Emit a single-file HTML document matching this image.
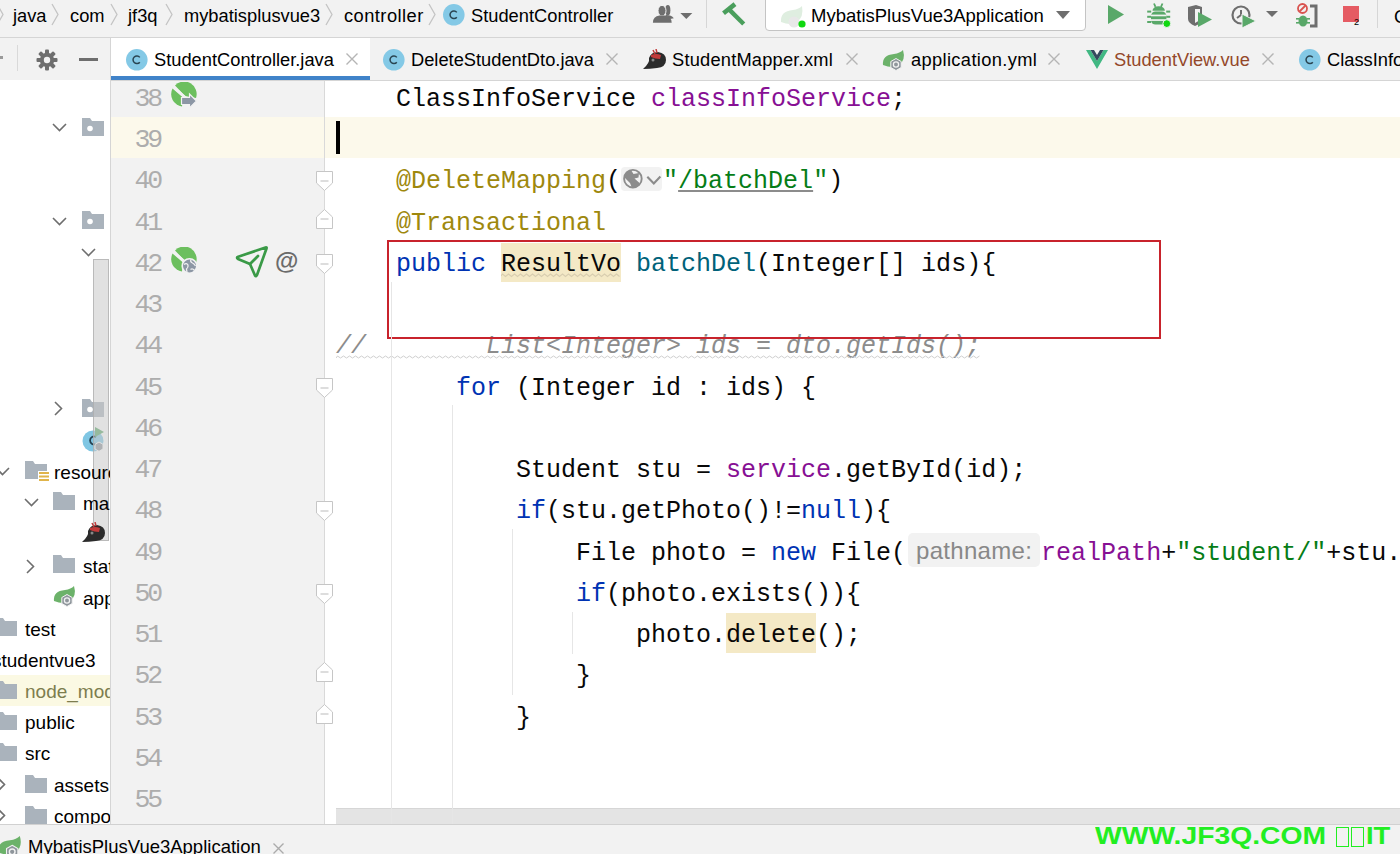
<!DOCTYPE html><html><head><meta charset="utf-8"><style>
*{box-sizing:border-box}
html,body{margin:0;padding:0}
body{width:1400px;height:854px;overflow:hidden;position:relative;background:#fff;font-family:"Liberation Sans",sans-serif;color:#000}
.abs{position:absolute}
.ui{font-family:"Liberation Sans",sans-serif;font-size:18.3px;white-space:nowrap;position:absolute;line-height:1}
.code{position:absolute;left:336px;height:41.25px;line-height:41.25px;margin-top:3px;font-family:"Liberation Mono",monospace;font-size:25px;white-space:pre;color:#080808}
.ln{position:absolute;left:108px;width:52px;margin-top:3px;text-align:right;height:41.25px;line-height:41.25px;font-family:"Liberation Mono",monospace;font-size:26.5px;color:#adadad;letter-spacing:-3.2px}
.chev{position:absolute;width:8px;height:22px}
.tree{font-family:"Liberation Sans",sans-serif;font-size:19px;white-space:nowrap;position:absolute;line-height:1;color:#000;height:24px}
</style></head><body>
<div class="abs" style="left:0;top:0;width:1400px;height:37px;background:#f2f2f2"></div>
<div class="abs" style="left:0;top:37px;width:1400px;height:1px;background:#d5d5d5"></div>
<svg class="abs" style="left:-4px;top:3px" width="9" height="23" viewBox="0 0 9 23"><path d="M1 1 L7 11.5 L1 22" fill="none" stroke="#c4c4c4" stroke-width="1.3"/></svg>
<div class="ui" style="left:13px;top:7px">java</div>
<svg class="abs" style="left:51px;top:3px" width="9" height="23" viewBox="0 0 9 23"><path d="M1 1 L7 11.5 L1 22" fill="none" stroke="#c4c4c4" stroke-width="1.3"/></svg>
<div class="ui" style="left:70px;top:7px">com</div>
<svg class="abs" style="left:110px;top:3px" width="9" height="23" viewBox="0 0 9 23"><path d="M1 1 L7 11.5 L1 22" fill="none" stroke="#c4c4c4" stroke-width="1.3"/></svg>
<div class="ui" style="left:128px;top:7px">jf3q</div>
<svg class="abs" style="left:165px;top:3px" width="9" height="23" viewBox="0 0 9 23"><path d="M1 1 L7 11.5 L1 22" fill="none" stroke="#c4c4c4" stroke-width="1.3"/></svg>
<div class="ui" style="left:184px;top:7px">mybatisplusvue3</div>
<svg class="abs" style="left:325px;top:3px" width="9" height="23" viewBox="0 0 9 23"><path d="M1 1 L7 11.5 L1 22" fill="none" stroke="#c4c4c4" stroke-width="1.3"/></svg>
<div class="ui" style="left:344px;top:7px;letter-spacing:0.45px">controller</div>
<svg class="abs" style="left:428px;top:3px" width="9" height="23" viewBox="0 0 9 23"><path d="M1 1 L7 11.5 L1 22" fill="none" stroke="#c4c4c4" stroke-width="1.3"/></svg>
<svg class="abs" style="left:441.7px;top:3.1999999999999993px" width="23.6" height="23.6" viewBox="0 0 23.6 23.6"><circle cx="11.8" cy="11.8" r="10.8" fill="#84c9e6"/><path d="M14.8 9.4 A3.8 3.8 0 1 0 14.8 14.200000000000001" fill="none" stroke="#2a4552" stroke-width="1.5"/></svg>
<div class="ui" style="left:471px;top:7px">StudentController</div>
<svg class="abs" style="left:650px;top:0px" width="46" height="30" viewBox="0 0 46 30">
<ellipse cx="17.8" cy="10.2" rx="2.6" ry="5.2" fill="#6e6e6e"/><path d="M15 15 Q21 14.5 23.8 18.2 L20 19 Z" fill="#6e6e6e"/>
<ellipse cx="12" cy="10.7" rx="4" ry="5.3" fill="#6e6e6e" stroke="#f2f2f2" stroke-width="1"/><path d="M2.9 22.7 Q3 16.5 9.5 15.6 L14.5 15.6 Q21.5 16.5 21.7 22.7 Z" fill="#6e6e6e"/>
<path d="M30.3 12.9 L42.3 12.9 L36.3 18.9 Z" fill="#6e6e6e"/></svg>
<div class="abs" style="left:706px;top:0;width:1px;height:28px;background:#d6d6d6"></div>
<svg class="abs" style="left:719px;top:0px" width="28" height="28" viewBox="0 0 28 28">
<path d="M4.5 13.3 L16 4.1" stroke="#4a9e5c" stroke-width="4.6"/><path d="M10 9.4 L24.7 24" stroke="#4a9e5c" stroke-width="4.4"/></svg>
<div class="abs" style="left:765px;top:-4px;width:321px;height:35px;background:#fff;border:1px solid #c4c4c4;border-radius:4px"></div>
<svg class="abs" style="left:779px;top:5px" width="28" height="24" viewBox="0 0 28 24">
<path d="M2 17 Q1 6 14 5 Q20 4 23 1 Q25 12 18 17 Q12 21 2 17 Z" fill="#dfeee0"/>
<circle cx="15" cy="17" r="5.5" fill="#e8e8e8"/><circle cx="23" cy="19" r="3.6" fill="#10d810"/></svg>
<div class="ui" style="left:811px;top:7px;font-size:18.5px">MybatisPlusVue3Application</div>
<svg class="abs" style="left:1056px;top:11px" width="15" height="9" viewBox="0 0 15 9"><path d="M0 0 L14 0 L7 8 Z" fill="#6e6e6e"/></svg>
<svg class="abs" style="left:1107px;top:5px" width="18" height="19" viewBox="0 0 18 19"><path d="M1 0 L17 9.5 L1 19 Z" fill="#59a869"/></svg>
<svg class="abs" style="left:1146px;top:0px" width="27" height="30" viewBox="0 0 27 30">
<g stroke="#59a869" stroke-width="1.8"><path d="M8 3.5 L9.5 6.8 M16.5 3.5 L15 6.8"/></g>
<g fill="#59a869"><path d="M6.5 10.8 A6.2 4.6 0 0 1 18.9 10.8 Z"/><rect x="5" y="11.5" width="15.4" height="13" rx="4.5"/>
<rect x="1.2" y="10.6" width="4" height="2"/><rect x="1.2" y="15.8" width="4" height="2"/><rect x="1.2" y="21" width="4" height="2"/>
<rect x="20.2" y="10.6" width="4" height="2"/><rect x="20.2" y="15.8" width="4" height="2"/></g>
<rect x="5" y="14.6" width="15.4" height="1.7" fill="#f2f2f2"/><rect x="5" y="19.2" width="15.4" height="1.7" fill="#f2f2f2"/>
<circle cx="20.8" cy="23.6" r="3.9" fill="#10d810" stroke="#f2f2f2" stroke-width="1"/></svg>
<svg class="abs" style="left:1187px;top:5px" width="27" height="22" viewBox="0 0 27 22">
<path d="M1 2 L9 0 L15 2 L15 14 Q15 18 8 21 Q1 18 1 14 Z" fill="#6e6e6e"/><path d="M8 4 L13 4 L13 15 L8 18 Z" fill="#f2f2f2"/>
<path d="M11 7 L25 14.5 L11 22 Z" fill="#59a869"/></svg>
<svg class="abs" style="left:1231px;top:5px" width="50" height="24" viewBox="0 0 50 24">
<circle cx="10" cy="10" r="8.5" fill="none" stroke="#6e6e6e" stroke-width="2.2"/><path d="M10 5 L10 10 L6 13" fill="none" stroke="#6e6e6e" stroke-width="2"/>
<path d="M11 9 L25 16 L11 23 Z" fill="#59a869" stroke="#f2f2f2" stroke-width="1"/>
<path d="M35 6 L47 6 L41 12 Z" fill="#6e6e6e"/></svg>
<svg class="abs" style="left:1296px;top:3px" width="24" height="25" viewBox="0 0 24 25">
<circle cx="6.5" cy="5.5" r="4.5" fill="none" stroke="#d9534f" stroke-width="1.8"/><path d="M3.5 8.5 L9.5 2.5" stroke="#d9534f" stroke-width="1.8"/>
<g fill="#59a869"><ellipse cx="7" cy="18" rx="4.5" ry="5.5"/><rect x="0" y="15" width="3" height="1.6"/><rect x="0" y="19" width="3" height="1.6"/><rect x="11" y="15" width="3" height="1.6"/><rect x="11" y="19" width="3" height="1.6"/></g>
<path d="M14 3 L20 3 L20 23 L14 23" fill="none" stroke="#6e6e6e" stroke-width="3"/></svg>
<div class="abs" style="left:1343px;top:6px;width:16px;height:16px;background:#e55b63"></div>
<div class="abs" style="left:1354px;top:18px;font-size:9px;line-height:9px;color:#000;font-family:'Liberation Sans',sans-serif">2</div>
<div class="abs" style="left:1377px;top:0;width:1px;height:28px;background:#d6d6d6"></div>
<div class="ui" style="left:1394px;top:8px">C</div>
<div class="abs" style="left:0;top:38px;width:1400px;height:42px;background:#f2f2f2"></div>
<div class="abs" style="left:111px;top:80px;width:1289px;height:1px;background:#d5d5d5"></div>
<div class="abs" style="left:17px;top:45px;width:1px;height:26px;background:#d9d9d9"></div>
<svg class="abs" style="left:36px;top:49px" width="22" height="22" viewBox="0 0 22 22">
<g fill="#6e6e6e"><circle cx="11" cy="11" r="7.2"/>
<rect x="9" y="0.5" width="4" height="21" rx="1"/><rect x="0.5" y="9" width="21" height="4" rx="1"/>
<rect x="9" y="0.5" width="4" height="21" rx="1" transform="rotate(45 11 11)"/><rect x="9" y="0.5" width="4" height="21" rx="1" transform="rotate(-45 11 11)"/></g>
<circle cx="11" cy="11" r="3.2" fill="#f2f2f2"/></svg>
<div class="abs" style="left:79px;top:58px;width:19px;height:3px;background:#6e6e6e"></div>
<div class="abs" style="left:0;top:56px;width:3px;height:3px;background:#9a9a9a"></div>
<div class="abs" style="left:111px;top:38px;width:259px;height:42px;background:#fff"></div>
<div class="abs" style="left:111px;top:76px;width:259px;height:4px;background:#4083c9"></div>
<svg class="abs" style="left:124.50000000000001px;top:48.2px" width="23.6" height="23.6" viewBox="0 0 23.6 23.6"><circle cx="11.8" cy="11.8" r="10.8" fill="#84c9e6"/><path d="M14.8 9.4 A3.8 3.8 0 1 0 14.8 14.200000000000001" fill="none" stroke="#2a4552" stroke-width="1.5"/></svg>
<div class="ui" style="left:154px;top:51px">StudentController.java</div>
<svg class="abs" style="left:345.5px;top:53.0px" width="12" height="12" viewBox="0 0 12 12"><path d="M0.5 0.5 L11.5 11.5 M11.5 0.5 L0.5 11.5" stroke="#b5b5b5" stroke-width="1.4"/></svg>
<svg class="abs" style="left:381.7px;top:47.8px" width="23.6" height="23.6" viewBox="0 0 23.6 23.6"><circle cx="11.8" cy="11.8" r="10.8" fill="#84c9e6"/><path d="M14.8 9.4 A3.8 3.8 0 1 0 14.8 14.200000000000001" fill="none" stroke="#2a4552" stroke-width="1.5"/></svg>
<div class="ui" style="left:411px;top:51px">DeleteStudentDto.java</div>
<svg class="abs" style="left:606.0px;top:53.0px" width="12" height="12" viewBox="0 0 12 12"><path d="M0.5 0.5 L11.5 11.5 M11.5 0.5 L0.5 11.5" stroke="#b5b5b5" stroke-width="1.4"/></svg>
<svg class="abs" style="left:642px;top:49px" width="26" height="22" viewBox="0 0 26 22"><path d="M1 20 Q8 14 7 9 Q9 3 16 3 Q24 4 24 11 Q24 18 15 19 Q8 20 1 20 Z" fill="#2b2b2b"/><path d="M9 6 Q14 4 19 6 L18 10 Q13 10 9 8 Z" fill="#c23b3b"/><path d="M11 1 L13 5 M14 0 L15 4" stroke="#c23b3b" stroke-width="1.5"/><circle cx="11" cy="11" r="1.5" fill="#888"/></svg>
<div class="ui" style="left:672px;top:51px;letter-spacing:0.2px">StudentMapper.xml</div>
<svg class="abs" style="left:846.0px;top:53.0px" width="12" height="12" viewBox="0 0 12 12"><path d="M0.5 0.5 L11.5 11.5 M11.5 0.5 L0.5 11.5" stroke="#b5b5b5" stroke-width="1.4"/></svg>
<svg class="abs" style="left:882px;top:50px" width="24" height="22" viewBox="0 0 24 22"><path d="M1 15 Q0 5 12 4 Q18 3 21 0 Q24 10 17 15 Q11 19 1 15 Z" fill="#6cb26a"/><path d="M14 8.5 L19.2 11.5 L19.2 17.5 L14 20.5 L8.8 17.5 L8.8 11.5 Z" fill="#8f969c" stroke="#f2f2f2" stroke-width="1"/><circle cx="14" cy="14.5" r="2.6" fill="none" stroke="#f2f2f2" stroke-width="1.3"/></svg>
<div class="ui" style="left:911px;top:51px;letter-spacing:0.35px">application.yml</div>
<svg class="abs" style="left:1048.0px;top:53.0px" width="12" height="12" viewBox="0 0 12 12"><path d="M0.5 0.5 L11.5 11.5 M11.5 0.5 L0.5 11.5" stroke="#b5b5b5" stroke-width="1.4"/></svg>
<svg class="abs" style="left:1086px;top:50px" width="22" height="19" viewBox="0 0 22 19"><path d="M0 0 L4.5 0 L11 11 L17.5 0 L22 0 L11 19 Z" fill="#41b883"/><path d="M4.5 0 L8 0 L11 5 L14 0 L17.5 0 L11 11 Z" fill="#35495e"/></svg>
<div class="ui" style="left:1114px;top:51px;color:#94482a">StudentView.vue</div>
<svg class="abs" style="left:1262.0px;top:53.0px" width="12" height="12" viewBox="0 0 12 12"><path d="M0.5 0.5 L11.5 11.5 M11.5 0.5 L0.5 11.5" stroke="#b5b5b5" stroke-width="1.4"/></svg>
<svg class="abs" style="left:1297.5px;top:48.2px" width="23.6" height="23.6" viewBox="0 0 23.6 23.6"><circle cx="11.8" cy="11.8" r="10.8" fill="#84c9e6"/><path d="M14.8 9.4 A3.8 3.8 0 1 0 14.8 14.200000000000001" fill="none" stroke="#2a4552" stroke-width="1.5"/></svg>
<div class="ui" style="left:1327px;top:51px">ClassInfoService.java</div>
<div class="abs" style="left:110px;top:38px;width:1px;height:786px;background:#d5d5d5"></div>
<svg class="abs" style="left:52px;top:123px" width="15" height="9" viewBox="0 0 15 9"><path d="M1 1 L7.5 7.5 L14 1" fill="none" stroke="#6e6e6e" stroke-width="1.6"/></svg>
<svg class="abs" style="left:82px;top:118px" width="22" height="18" viewBox="0 0 22 18"><path d="M0 0 L8 0 L10 3 L22 3 L22 18 L0 18 Z" fill="#aab3bc"/><circle cx="8" cy="10.5" r="2.8" fill="#fff"/></svg>
<svg class="abs" style="left:52px;top:217px" width="15" height="9" viewBox="0 0 15 9"><path d="M1 1 L7.5 7.5 L14 1" fill="none" stroke="#6e6e6e" stroke-width="1.6"/></svg>
<svg class="abs" style="left:82px;top:211px" width="22" height="18" viewBox="0 0 22 18"><path d="M0 0 L8 0 L10 3 L22 3 L22 18 L0 18 Z" fill="#aab3bc"/><circle cx="8" cy="10.5" r="2.8" fill="#fff"/></svg>
<svg class="abs" style="left:81px;top:248px" width="15" height="9" viewBox="0 0 15 9"><path d="M1 1 L7.5 7.5 L14 1" fill="none" stroke="#6e6e6e" stroke-width="1.6"/></svg>
<svg class="abs" style="left:54px;top:401px" width="9" height="15" viewBox="0 0 9 15"><path d="M1 1 L7.5 7.5 L1 14" fill="none" stroke="#6e6e6e" stroke-width="1.6"/></svg>
<svg class="abs" style="left:82px;top:399px" width="22" height="18" viewBox="0 0 22 18"><path d="M0 0 L8 0 L10 3 L22 3 L22 18 L0 18 Z" fill="#aab3bc"/><circle cx="8" cy="10.5" r="2.8" fill="#fff"/></svg>
<svg class="abs" style="left:82px;top:427px" width="24" height="26" viewBox="0 0 24 26"><circle cx="11" cy="14" r="10.5" fill="#7fc6e3"/>
<path d="M14 10 A4 4 0 1 0 14 17" fill="none" stroke="#24404f" stroke-width="1.8"/><path d="M13 0 L22 5 L13 10 Z" fill="#59a869"/>
<path d="M17 15 L21 17.3 L21 22 L17 24.3 L13 22 L13 17.3 Z" fill="#8f969c" stroke="#fff" stroke-width="1"/></svg>
<svg class="abs" style="left:-5px;top:467px" width="15" height="9" viewBox="0 0 15 9"><path d="M1 1 L7.5 7.5 L14 1" fill="none" stroke="#6e6e6e" stroke-width="1.6"/></svg>
<svg class="abs" style="left:25px;top:461px" width="25" height="22" viewBox="0 0 25 22"><path d="M0 0 L8 0 L10 3 L22 3 L22 10 L13 10 L13 18 L0 18 Z" fill="#aab3bc"/>
<g fill="#e0b44a"><rect x="14" y="11" width="10" height="2"/><rect x="14" y="14.5" width="10" height="2"/><rect x="14" y="18" width="10" height="2"/></g></svg>
<div class="abs" style="left:93px;top:259px;width:16px;height:282px;background:rgba(200,200,200,0.55);border:1px solid rgba(170,170,170,0.7)"></div>
<div class="tree" style="left:54px;top:463px;width:56px;overflow:hidden">resources</div>
<svg class="abs" style="left:24px;top:498px" width="15" height="9" viewBox="0 0 15 9"><path d="M1 1 L7.5 7.5 L14 1" fill="none" stroke="#6e6e6e" stroke-width="1.6"/></svg>
<svg class="abs" style="left:53px;top:492px" width="22" height="18" viewBox="0 0 22 18"><path d="M0 0 L8 0 L10 3 L22 3 L22 18 L0 18 Z" fill="#aab3bc"/></svg>
<div class="tree" style="left:83px;top:494px;width:27px;overflow:hidden">mapper</div>
<svg class="abs" style="left:81px;top:522px" width="26" height="22" viewBox="0 0 26 22"><path d="M1 20 Q8 14 7 9 Q9 3 16 3 Q24 4 24 11 Q24 18 15 19 Q8 20 1 20 Z" fill="#2b2b2b"/><path d="M9 6 Q14 4 19 6 L18 10 Q13 10 9 8 Z" fill="#c23b3b"/><path d="M11 1 L13 5 M14 0 L15 4" stroke="#c23b3b" stroke-width="1.5"/><circle cx="11" cy="11" r="1.5" fill="#888"/></svg>
<svg class="abs" style="left:26px;top:559px" width="9" height="15" viewBox="0 0 9 15"><path d="M1 1 L7.5 7.5 L1 14" fill="none" stroke="#6e6e6e" stroke-width="1.6"/></svg>
<svg class="abs" style="left:53px;top:555px" width="22" height="18" viewBox="0 0 22 18"><path d="M0 0 L8 0 L10 3 L22 3 L22 18 L0 18 Z" fill="#aab3bc"/></svg>
<div class="tree" style="left:83px;top:557px;width:27px;overflow:hidden">static</div>
<svg class="abs" style="left:53px;top:586px" width="24" height="22" viewBox="0 0 24 22"><path d="M1 15 Q0 5 12 4 Q18 3 21 0 Q24 10 17 15 Q11 19 1 15 Z" fill="#6cb26a"/><path d="M14 8.5 L19.2 11.5 L19.2 17.5 L14 20.5 L8.8 17.5 L8.8 11.5 Z" fill="#8f969c" stroke="#f2f2f2" stroke-width="1"/><circle cx="14" cy="14.5" r="2.6" fill="none" stroke="#f2f2f2" stroke-width="1.3"/></svg>
<div class="tree" style="left:83px;top:589px;width:27px;overflow:hidden">application.yml</div>
<svg class="abs" style="left:-5px;top:618px" width="22" height="18" viewBox="0 0 22 18"><path d="M0 0 L8 0 L10 3 L22 3 L22 18 L0 18 Z" fill="#aab3bc"/></svg>
<div class="tree" style="left:25px;top:620px">test</div>
<div class="tree" style="left:-8px;top:651px">studentvue3</div>
<div class="abs" style="left:0;top:675px;width:110px;height:31px;background:#fbf9e3"></div>
<svg class="abs" style="left:-5px;top:681px" width="22" height="18" viewBox="0 0 22 18"><path d="M0 0 L8 0 L10 3 L22 3 L22 18 L0 18 Z" fill="#aab3bc"/></svg>
<div class="tree" style="left:25px;top:682px;width:85px;height:24px;overflow:hidden;color:#7d7d4e">node_modules</div>
<svg class="abs" style="left:-5px;top:712px" width="22" height="18" viewBox="0 0 22 18"><path d="M0 0 L8 0 L10 3 L22 3 L22 18 L0 18 Z" fill="#aab3bc"/></svg>
<div class="tree" style="left:25px;top:713px">public</div>
<svg class="abs" style="left:-5px;top:743px" width="22" height="18" viewBox="0 0 22 18"><path d="M0 0 L8 0 L10 3 L22 3 L22 18 L0 18 Z" fill="#aab3bc"/></svg>
<div class="tree" style="left:25px;top:744px">src</div>
<svg class="abs" style="left:-3px;top:777px" width="9" height="15" viewBox="0 0 9 15"><path d="M1 1 L7.5 7.5 L1 14" fill="none" stroke="#6e6e6e" stroke-width="1.6"/></svg>
<svg class="abs" style="left:25px;top:775px" width="22" height="18" viewBox="0 0 22 18"><path d="M0 0 L8 0 L10 3 L22 3 L22 18 L0 18 Z" fill="#aab3bc"/></svg>
<div class="tree" style="left:54px;top:776px">assets</div>
<svg class="abs" style="left:-3px;top:808px" width="9" height="15" viewBox="0 0 9 15"><path d="M1 1 L7.5 7.5 L1 14" fill="none" stroke="#6e6e6e" stroke-width="1.6"/></svg>
<svg class="abs" style="left:25px;top:806px" width="22" height="18" viewBox="0 0 22 18"><path d="M0 0 L8 0 L10 3 L22 3 L22 18 L0 18 Z" fill="#aab3bc"/></svg>
<div class="tree" style="left:54px;top:807px;width:56px;overflow:hidden">components</div>
<div class="abs" style="left:111px;top:81px;width:213px;height:743px;background:#f2f2f2"></div>
<div class="abs" style="left:324px;top:81px;width:1px;height:743px;background:#d9d9d9"></div>
<div class="abs" style="left:111px;top:117px;width:213px;height:41px;background:#fcf9eb"></div>
<div class="abs" style="left:325px;top:117px;width:1075px;height:41px;background:#fcf9eb"></div>
<div class="ln" style="top:75.75px">38</div>
<div class="ln" style="top:117.0px">39</div>
<div class="ln" style="top:158.25px">40</div>
<div class="ln" style="top:199.5px">41</div>
<div class="ln" style="top:240.75px">42</div>
<div class="ln" style="top:282.0px">43</div>
<div class="ln" style="top:323.25px">44</div>
<div class="ln" style="top:364.5px">45</div>
<div class="ln" style="top:405.75px">46</div>
<div class="ln" style="top:447.0px">47</div>
<div class="ln" style="top:488.25px">48</div>
<div class="ln" style="top:529.5px">49</div>
<div class="ln" style="top:570.75px">50</div>
<div class="ln" style="top:612.0px">51</div>
<div class="ln" style="top:653.25px">52</div>
<div class="ln" style="top:694.5px">53</div>
<div class="ln" style="top:735.75px">54</div>
<div class="ln" style="top:777.0px">55</div>
<svg class="abs" style="left:316px;top:171.25px" width="17" height="20" viewBox="0 0 17 20"><path d="M0.5 0.5 L16.5 0.5 L16.5 12 L8.5 19.5 L0.5 12 Z" fill="#fff" stroke="#c6c6c6" stroke-width="1"/><path d="M4.5 10 L12.5 10" stroke="#c6c6c6" stroke-width="1.2"/></svg>
<svg class="abs" style="left:316px;top:208.5px" width="17" height="20" viewBox="0 0 17 20"><path d="M0.5 19.5 L16.5 19.5 L16.5 8 L8.5 0.5 L0.5 8 Z" fill="#fff" stroke="#c6c6c6" stroke-width="1"/><path d="M4.5 10 L12.5 10" stroke="#c6c6c6" stroke-width="1.2"/></svg>
<svg class="abs" style="left:316px;top:253.75px" width="17" height="20" viewBox="0 0 17 20"><path d="M0.5 0.5 L16.5 0.5 L16.5 12 L8.5 19.5 L0.5 12 Z" fill="#fff" stroke="#c6c6c6" stroke-width="1"/><path d="M4.5 10 L12.5 10" stroke="#c6c6c6" stroke-width="1.2"/></svg>
<svg class="abs" style="left:316px;top:377.5px" width="17" height="20" viewBox="0 0 17 20"><path d="M0.5 0.5 L16.5 0.5 L16.5 12 L8.5 19.5 L0.5 12 Z" fill="#fff" stroke="#c6c6c6" stroke-width="1"/><path d="M4.5 10 L12.5 10" stroke="#c6c6c6" stroke-width="1.2"/></svg>
<svg class="abs" style="left:316px;top:501.25px" width="17" height="20" viewBox="0 0 17 20"><path d="M0.5 0.5 L16.5 0.5 L16.5 12 L8.5 19.5 L0.5 12 Z" fill="#fff" stroke="#c6c6c6" stroke-width="1"/><path d="M4.5 10 L12.5 10" stroke="#c6c6c6" stroke-width="1.2"/></svg>
<svg class="abs" style="left:316px;top:583.75px" width="17" height="20" viewBox="0 0 17 20"><path d="M0.5 0.5 L16.5 0.5 L16.5 12 L8.5 19.5 L0.5 12 Z" fill="#fff" stroke="#c6c6c6" stroke-width="1"/><path d="M4.5 10 L12.5 10" stroke="#c6c6c6" stroke-width="1.2"/></svg>
<svg class="abs" style="left:316px;top:662.25px" width="17" height="20" viewBox="0 0 17 20"><path d="M0.5 19.5 L16.5 19.5 L16.5 8 L8.5 0.5 L0.5 8 Z" fill="#fff" stroke="#c6c6c6" stroke-width="1"/><path d="M4.5 10 L12.5 10" stroke="#c6c6c6" stroke-width="1.2"/></svg>
<svg class="abs" style="left:316px;top:703.5px" width="17" height="20" viewBox="0 0 17 20"><path d="M0.5 19.5 L16.5 19.5 L16.5 8 L8.5 0.5 L0.5 8 Z" fill="#fff" stroke="#c6c6c6" stroke-width="1"/><path d="M4.5 10 L12.5 10" stroke="#c6c6c6" stroke-width="1.2"/></svg>
<svg class="abs" style="left:171px;top:82px" width="27" height="27" viewBox="0 0 27 27">
<path d="M4 3.5 A12.5 12.5 0 0 1 25 16 L14 14 Z" fill="#6cbf5e"/><path d="M1.5 6.5 A12.5 12.5 0 0 0 11 24.5 L12 15.5 Z" fill="#6cbf5e"/>
<path d="M2.5 5 L16 17" stroke="#f2f2f2" stroke-width="2.5"/>
<path d="M10.5 15.5 L18.5 15.5 L18.5 12 L25.5 19 L18.5 26 L18.5 22.5 L10.5 22.5 Z" fill="#8d97a5" stroke="#f2f2f2" stroke-width="1.2"/></svg>
<svg class="abs" style="left:171px;top:247px" width="27" height="27" viewBox="0 0 27 27">
<path d="M4 3.5 A12.5 12.5 0 0 1 25 16 L14 14 Z" fill="#6cbf5e"/><path d="M1.5 6.5 A12.5 12.5 0 0 0 11 24.5 L12 15.5 Z" fill="#6cbf5e"/>
<path d="M2.5 5 L13 14" stroke="#f2f2f2" stroke-width="2.5"/>
<circle cx="18.5" cy="19" r="7.3" fill="#8d97a5" stroke="#f2f2f2" stroke-width="1.6"/>
<path d="M13 17.5 Q15.5 15.5 17 18 Q17.5 20.5 15.5 22 L16 25.5 M20 12.5 Q19 15 21.5 16 Q23 16.5 24.5 19 M19.5 22.5 Q21.5 21 23.5 23.5" fill="none" stroke="#f2f2f2" stroke-width="1.3"/></svg>
<svg class="abs" style="left:235px;top:245px" width="34" height="33" viewBox="0 0 34 33">
<path d="M2.5 12 L30.5 2.5 Q32 2 31.5 3.5 L22 30 Q21 32 20 30.5 L15 19 L3 14 Q1.5 13 2.5 12 Z" fill="none" stroke="#3a9a47" stroke-width="2.7" stroke-linejoin="round"/>
<path d="M15 19 L23 11" stroke="#3a9a47" stroke-width="2.7" stroke-linecap="round"/></svg>
<div class="abs" style="left:275px;top:246px;font-family:'Liberation Sans',sans-serif;font-weight:bold;font-size:24px;line-height:30px;color:#6b6b6b">@</div>
<div class="abs" style="left:512px;top:529px;width:1px;height:166px;background:#e6e6e6"></div>
<div class="abs" style="left:572px;top:612px;width:1px;height:42px;background:#e6e6e6"></div>
<div class="code" style="top:75.75px">    ClassInfoService <span style="color:#871094;">classInfoService</span>;</div>
<div class="abs" style="left:336px;top:121px;width:4px;height:33px;background:#000"></div>
<div class="code" style="top:158.25px">    <span style="color:#9e880d;">@DeleteMapping</span>(<span style="display:inline-block;width:42px"></span><span style="color:#067d17;">"</span><span style="color:#067d17;text-decoration:underline;text-decoration-color:#8c8c8c;text-underline-offset:2px">/batchDel</span><span style="color:#067d17;">"</span>)</div>
<div class="abs" style="left:621px;top:167px;width:41px;height:24px;background:#f2f2f2;border-radius:4px"></div>
<svg class="abs" style="left:621px;top:167px" width="41" height="24" viewBox="0 0 41 24">
<defs><clipPath id="gc"><circle cx="11.9" cy="11.7" r="8.8"/></clipPath></defs>
<g clip-path="url(#gc)"><path d="M2 4 L10 3 L12.5 7 L18 6 L17.5 10.5 L13.5 11.5 L18.5 16 L17 21 L11 21 L9 16 L4 11 Z" fill="#8c8c8c"/></g>
<circle cx="11.9" cy="11.7" r="8.8" fill="none" stroke="#8c8c8c" stroke-width="1.9"/>
<path d="M26.3 9.7 L32.8 16.5 L39.4 9.5" fill="none" stroke="#8c8c8c" stroke-width="2.1"/></svg>
<div class="code" style="top:199.5px">    <span style="color:#9e880d;">@Transactional</span></div>
<div class="abs" style="left:501px;top:243px;width:120px;height:39px;background:#f4e9c6"></div>
<svg class="abs" style="left:501px;top:272px" width="120" height="6" viewBox="0 0 120 6"><path d="M0 4 L1.5 2 L4.5 4.5 L7.5 2 L10.5 4.5 L13.5 2 L16.5 4.5 L19.5 2 L22.5 4.5 L25.5 2 L28.5 4.5 L31.5 2 L34.5 4.5 L37.5 2 L40.5 4.5 L43.5 2 L46.5 4.5 L49.5 2 L52.5 4.5 L55.5 2 L58.5 4.5 L61.5 2 L64.5 4.5 L67.5 2 L70.5 4.5 L73.5 2 L76.5 4.5 L79.5 2 L82.5 4.5 L85.5 2 L88.5 4.5 L91.5 2 L94.5 4.5 L97.5 2 L100.5 4.5 L103.5 2 L106.5 4.5 L109.5 2 L112.5 4.5 L115.5 2 L118.5 4.5" fill="none" stroke="#d9ceb0" stroke-width="1.2"/></svg>
<div class="code" style="top:240.75px">    <span style="color:#0033b3;">public</span> ResultVo <span style="color:#00627a;">batchDel</span>(Integer[] ids){</div>
<div class="code" style="top:323.25px"><span style="color:#8c8c8c;font-style:italic">//        List&lt;Integer&gt; ids = dto.getIds();</span></div>
<div class="code" style="top:364.5px">        <span style="color:#0033b3;">for</span> (Integer id : ids) {</div>
<div class="code" style="top:447.0px">            Student stu = <span style="color:#871094;">service</span>.getById(id);</div>
<div class="code" style="top:488.25px">            <span style="color:#0033b3;">if</span>(stu.getPhoto()!=<span style="color:#0033b3;">null</span>){</div>
<div class="abs" style="left:908px;top:533px;width:132px;height:34px;background:#f2f2f2;border-radius:5px"></div>
<div class="abs" style="left:916px;top:538px;font-family:'Liberation Sans',sans-serif;font-size:24px;line-height:26px;color:#888888;white-space:nowrap;letter-spacing:0.3px">pathname:</div>
<div class="code" style="top:529.5px">                File photo = <span style="color:#0033b3;">new</span> File(<span style="display:inline-block;width:135px"></span><span style="color:#871094;">realPath</span>+<span style="color:#067d17;">"student/"</span>+stu.getPhoto());</div>
<div class="code" style="top:570.75px">                <span style="color:#0033b3;">if</span>(photo.exists()){</div>
<div class="abs" style="left:726px;top:613px;width:90px;height:40px;background:#f4e9c6"></div>
<div class="code" style="top:612.0px">                    photo.delete();</div>
<div class="code" style="top:653.25px">                }</div>
<div class="code" style="top:694.5px">            }</div>
<svg class="abs" style="left:336px;top:355px" width="645" height="5" viewBox="0 0 645 5"><path d="M0 3 L1.5 1 L4.5 3 L7.5 1 L10.5 3 L13.5 1 L16.5 3 L19.5 1 L22.5 3 L25.5 1 L28.5 3 L31.5 1 L34.5 3 L37.5 1 L40.5 3 L43.5 1 L46.5 3 L49.5 1 L52.5 3 L55.5 1 L58.5 3 L61.5 1 L64.5 3 L67.5 1 L70.5 3 L73.5 1 L76.5 3 L79.5 1 L82.5 3 L85.5 1 L88.5 3 L91.5 1 L94.5 3 L97.5 1 L100.5 3 L103.5 1 L106.5 3 L109.5 1 L112.5 3 L115.5 1 L118.5 3 L121.5 1 L124.5 3 L127.5 1 L130.5 3 L133.5 1 L136.5 3 L139.5 1 L142.5 3 L145.5 1 L148.5 3 L151.5 1 L154.5 3 L157.5 1 L160.5 3 L163.5 1 L166.5 3 L169.5 1 L172.5 3 L175.5 1 L178.5 3 L181.5 1 L184.5 3 L187.5 1 L190.5 3 L193.5 1 L196.5 3 L199.5 1 L202.5 3 L205.5 1 L208.5 3 L211.5 1 L214.5 3 L217.5 1 L220.5 3 L223.5 1 L226.5 3 L229.5 1 L232.5 3 L235.5 1 L238.5 3 L241.5 1 L244.5 3 L247.5 1 L250.5 3 L253.5 1 L256.5 3 L259.5 1 L262.5 3 L265.5 1 L268.5 3 L271.5 1 L274.5 3 L277.5 1 L280.5 3 L283.5 1 L286.5 3 L289.5 1 L292.5 3 L295.5 1 L298.5 3 L301.5 1 L304.5 3 L307.5 1 L310.5 3 L313.5 1 L316.5 3 L319.5 1 L322.5 3 L325.5 1 L328.5 3 L331.5 1 L334.5 3 L337.5 1 L340.5 3 L343.5 1 L346.5 3 L349.5 1 L352.5 3 L355.5 1 L358.5 3 L361.5 1 L364.5 3 L367.5 1 L370.5 3 L373.5 1 L376.5 3 L379.5 1 L382.5 3 L385.5 1 L388.5 3 L391.5 1 L394.5 3 L397.5 1 L400.5 3 L403.5 1 L406.5 3 L409.5 1 L412.5 3 L415.5 1 L418.5 3 L421.5 1 L424.5 3 L427.5 1 L430.5 3 L433.5 1 L436.5 3 L439.5 1 L442.5 3 L445.5 1 L448.5 3 L451.5 1 L454.5 3 L457.5 1 L460.5 3 L463.5 1 L466.5 3 L469.5 1 L472.5 3 L475.5 1 L478.5 3 L481.5 1 L484.5 3 L487.5 1 L490.5 3 L493.5 1 L496.5 3 L499.5 1 L502.5 3 L505.5 1 L508.5 3 L511.5 1 L514.5 3 L517.5 1 L520.5 3 L523.5 1 L526.5 3 L529.5 1 L532.5 3 L535.5 1 L538.5 3 L541.5 1 L544.5 3 L547.5 1 L550.5 3 L553.5 1 L556.5 3 L559.5 1 L562.5 3 L565.5 1 L568.5 3 L571.5 1 L574.5 3 L577.5 1 L580.5 3 L583.5 1 L586.5 3 L589.5 1 L592.5 3 L595.5 1 L598.5 3 L601.5 1 L604.5 3 L607.5 1 L610.5 3 L613.5 1 L616.5 3 L619.5 1 L622.5 3 L625.5 1 L628.5 3 L631.5 1 L634.5 3 L637.5 1 L640.5 3 L643.5 1" fill="none" stroke="#cfcfcf" stroke-width="1"/></svg>
<div class="abs" style="left:387px;top:240px;width:774px;height:99px;border:2px solid #c8232c"></div>
<div class="abs" style="left:336px;top:808px;width:1064px;height:1px;background:#d6d6d6"></div>
<div class="abs" style="left:336px;top:809px;width:1064px;height:15px;background:#e4e4e4"></div>
<div class="abs" style="left:391px;top:282px;width:1px;height:542px;background:#e6e6e6"></div>
<div class="abs" style="left:452px;top:405px;width:1px;height:419px;background:#e6e6e6"></div>
<div class="abs" style="left:0;top:824px;width:1400px;height:30px;background:#f2f2f2;border-top:1px solid #d1d1d1"></div>
<svg class="abs" style="left:-4px;top:836px" width="28" height="24" viewBox="0 0 24 22"><path d="M1 15 Q0 5 12 4 Q18 3 21 0 Q24 10 17 15 Q11 19 1 15 Z" fill="#6cb26a"/><path d="M14 8.5 L19.2 11.5 L19.2 17.5 L14 20.5 L8.8 17.5 L8.8 11.5 Z" fill="#8f969c" stroke="#f2f2f2" stroke-width="1"/><circle cx="14" cy="14.5" r="2.6" fill="none" stroke="#f2f2f2" stroke-width="1.3"/></svg>
<div class="ui" style="left:28px;top:838px;font-size:18.5px">MybatisPlusVue3Application</div>
<svg class="abs" style="left:272.5px;top:842.5px" width="11" height="11" viewBox="0 0 11 11"><path d="M0.5 0.5 L10.5 10.5 M10.5 0.5 L0.5 10.5" stroke="#ababab" stroke-width="1.4"/></svg>
<div class="abs" style="left:1095px;top:823px;font-family:'Liberation Sans',sans-serif;font-weight:bold;font-size:24.5px;line-height:26px;color:#22ee22;white-space:nowrap;transform:scaleX(1.155);transform-origin:0 0">WWW.JF3Q.COM</div>
<div class="abs" style="left:1336px;top:827px;width:13px;height:20px;border:1px solid #22ee22"></div>
<div class="abs" style="left:1351px;top:827px;width:13px;height:20px;border:1px solid #22ee22"></div>
<div class="abs" style="left:1366px;top:823px;font-family:'Liberation Sans',sans-serif;font-weight:bold;font-size:24.5px;line-height:26px;color:#22ee22;white-space:nowrap;transform:scaleX(1.12);transform-origin:0 0">IT</div>
</body></html>
